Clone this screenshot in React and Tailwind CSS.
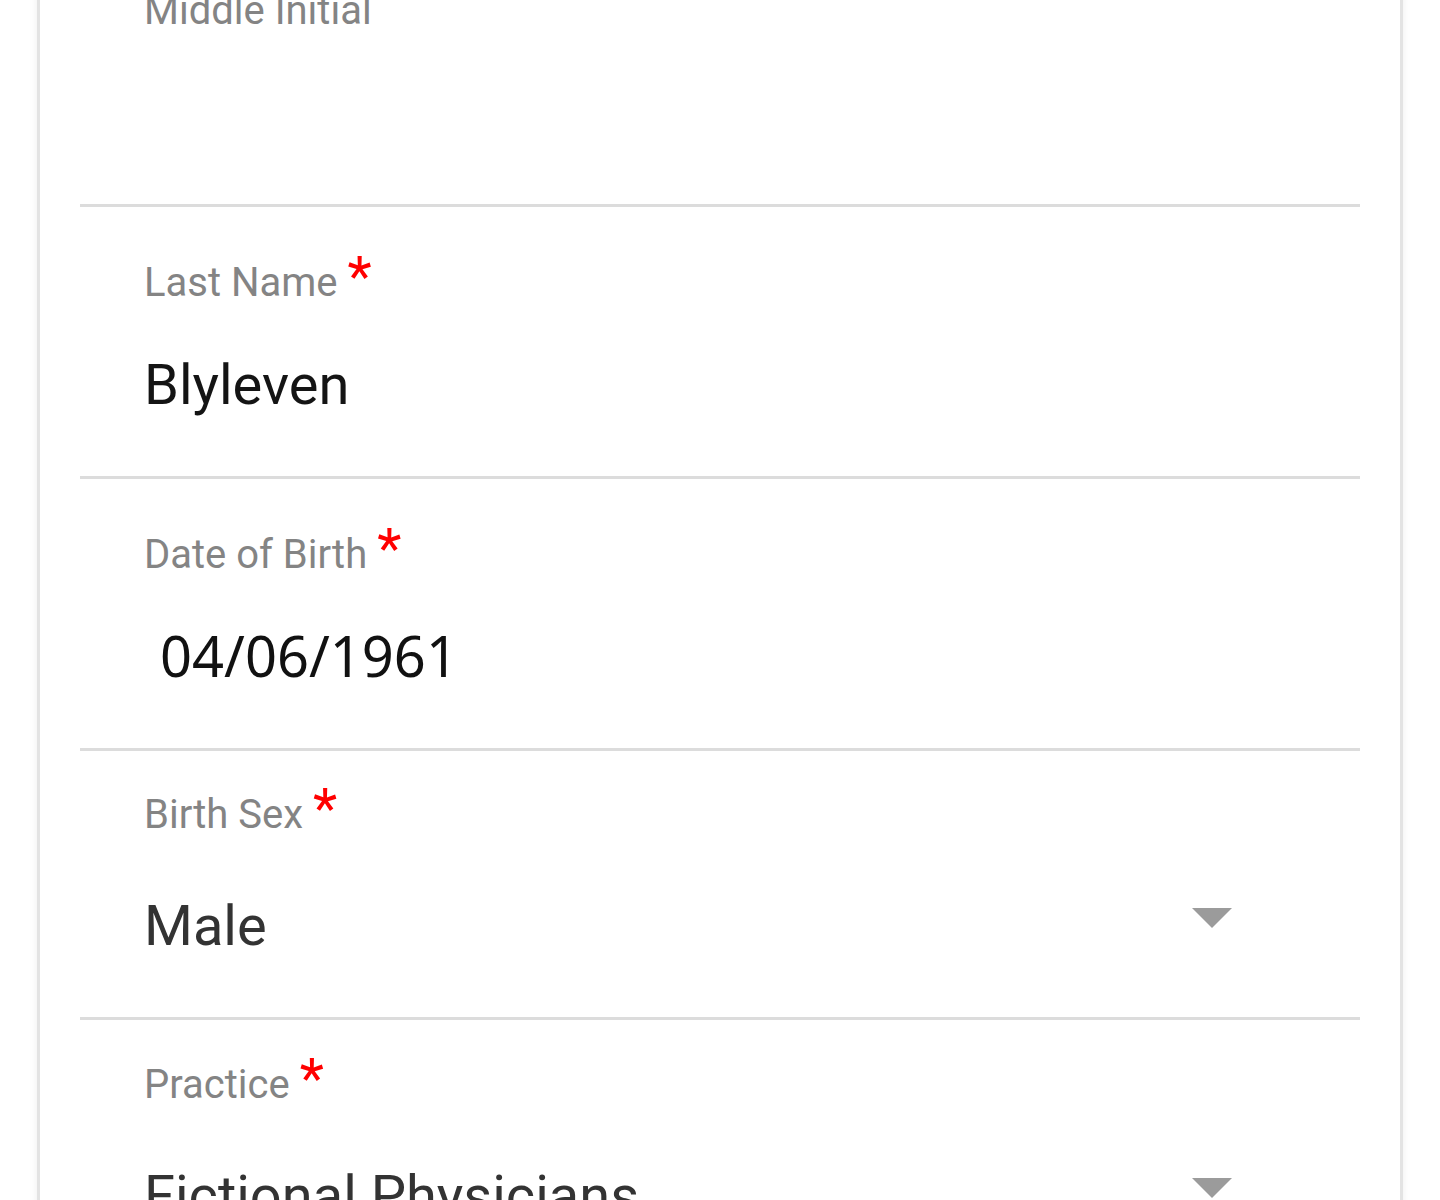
import React from "react";

function Label({ text }) {
  return (
    <div className="flex items-baseline h-[42px] text-[40px] leading-[42px] text-[#848484]">
      <span>{text}</span>
      <span className="ml-[10px] text-[56px] leading-[42px] text-[#ff0000]">*</span>
    </div>
  );
}

function Triangle() {
  return (
    <svg width="40" height="20" viewBox="0 0 40 20" className="mt-[10px] mr-[128px] shrink-0">
      <polygon points="0,0 40,0 20,20" fill="#9b9b9b" />
    </svg>
  );
}

export default function App() {
  return (
    <div className="h-[1200px] w-[1440px] overflow-hidden bg-white" style={{ fontFamily: "Roboto, 'Noto Sans', sans-serif" }}>
      <div className="ml-[37px] w-[1366px] h-[1400px] border-x-[3px] border-[#e3e3e3] bg-white px-[40px] shadow-[0_0_8px_rgba(0,0,0,0.07)] -mt-[14px]">
        {/* Middle Initial */}
        <div className="pl-[64px] pt-[4px] pb-[57px]">
          <div className="h-[42px] text-[40px] leading-[42px] text-[#848484]">Middle Initial</div>
          <div className="h-[56px] mt-[59px]"></div>
        </div>
        <div className="h-[3px] bg-[#dcdcdc]"></div>

        {/* Last Name */}
        <div className="pl-[64px] pt-[49px] pb-[63px]">
          <Label text="Last Name" />
          <div className="mt-[59px] h-[56px] text-[56px] leading-[56px] text-[#141414]">Blyleven</div>
        </div>
        <div className="h-[3px] bg-[#dcdcdc]"></div>

        {/* Date of Birth */}
        <div className="pl-[64px] pt-[49px] pb-[65px]">
          <Label text="Date of Birth" />
          <div
            className="mt-[57px] h-[56px] pl-[16px] text-[56px] leading-[56px] text-[#111111]"
            style={{ fontFamily: "'Noto Sans', 'Open Sans', sans-serif" }}
          >
            04/06/1961
          </div>
        </div>
        <div className="h-[3px] bg-[#dcdcdc]"></div>

        {/* Birth Sex */}
        <div className="pl-[64px] pt-[37px] pb-[63px]">
          <Label text="Birth Sex" />
          <div className="mt-[68px] flex items-start">
            <div className="flex-1 h-[56px] text-[56px] leading-[56px] text-[#333333]">Male</div>
            <Triangle />
          </div>
        </div>
        <div className="h-[3px] bg-[#dcdcdc]"></div>

        {/* Practice */}
        <div className="pl-[64px] pt-[38px] pb-[63px]">
          <Label text="Practice" />
          <div className="mt-[68px] flex items-start">
            <div className="flex-1 h-[56px] text-[56px] leading-[56px] text-[#333333]">Fictional Physicians</div>
            <Triangle />
          </div>
        </div>
        <div className="h-[3px] bg-[#dcdcdc]"></div>
      </div>
    </div>
  );
}
